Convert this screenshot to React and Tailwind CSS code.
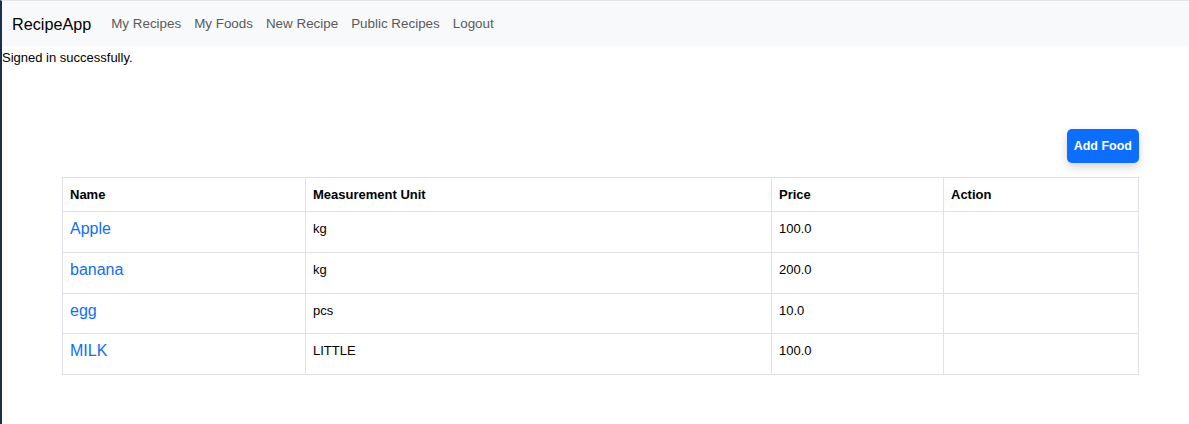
import React from 'react';

const foods = [
  { name: 'Apple', unit: 'kg', price: '100.0' },
  { name: 'banana', unit: 'kg', price: '200.0' },
  { name: 'egg', unit: 'pcs', price: '10.0' },
  { name: 'MILK', unit: 'LITTLE', price: '100.0' },
];

const navLinks = ['My Recipes', 'My Foods', 'New Recipe', 'Public Recipes', 'Logout'];

const App = () => {
  return (
    <div className="min-h-[424px] bg-white border-l-2 border-[#1c2f4f] border-t border-t-[#e3e5e8] font-['Liberation_Sans',Arial,sans-serif] text-[#212529]">
      {/* Navbar */}
      <nav className="h-[45px] bg-[#f8f9fa] flex items-center pl-[10px] pt-[2px]">
        <a className="text-[16.2px] text-black mr-[20px] cursor-pointer">RecipeApp</a>
        <div className="flex items-center gap-[13px]">
          {navLinks.map((link) => (
            <a key={link} className="text-[13.4px] text-[#595a5c] cursor-pointer">
              {link}
            </a>
          ))}
        </div>
      </nav>

      <p className="text-[13px] text-black leading-[22px] mt-[1px]">Signed in successfully.</p>

      {/* Foods */}
      <div className="pl-[60px] pr-[50px]">
        <div className="flex justify-end mt-[60px]">
          <button className="h-[34px] px-[7px] rounded-[5px] bg-[#0d6efd] text-white text-[12.5px] font-bold shadow-[0_4px_10px_rgba(0,0,0,0.18)]">
            Add Food
          </button>
        </div>
        <table className="w-full mt-[14px] border-collapse text-[13px] table-fixed">
          <colgroup>
            <col className="w-[243px]" />
            <col className="w-[466px]" />
            <col className="w-[172px]" />
            <col />
          </colgroup>
          <thead>
            <tr className="h-[34px]">
              {['Name', 'Measurement Unit', 'Price', 'Action'].map((h) => (
                <th key={h} className="border border-[#dee2e6] text-left font-bold px-[7px] pt-[1px] text-black">
                  {h}
                </th>
              ))}
            </tr>
          </thead>
          <tbody>
            {foods.map((f) => (
              <tr key={f.name} className="h-[40.75px]">
                <td className="border border-[#dee2e6] px-[7px] pt-[5px] align-top leading-[24px] text-[16px] text-[#0d6efd]">
                  <a className="cursor-pointer">{f.name}</a>
                </td>
                <td className="border border-[#dee2e6] px-[7px] pt-[7px] align-top leading-[20px] text-black">{f.unit}</td>
                <td className="border border-[#dee2e6] px-[7px] pt-[7px] align-top leading-[20px] text-black">{f.price}</td>
                <td className="border border-[#dee2e6] px-[7px]"></td>
              </tr>
            ))}
          </tbody>
        </table>
      </div>
    </div>
  );
};

export default App;
